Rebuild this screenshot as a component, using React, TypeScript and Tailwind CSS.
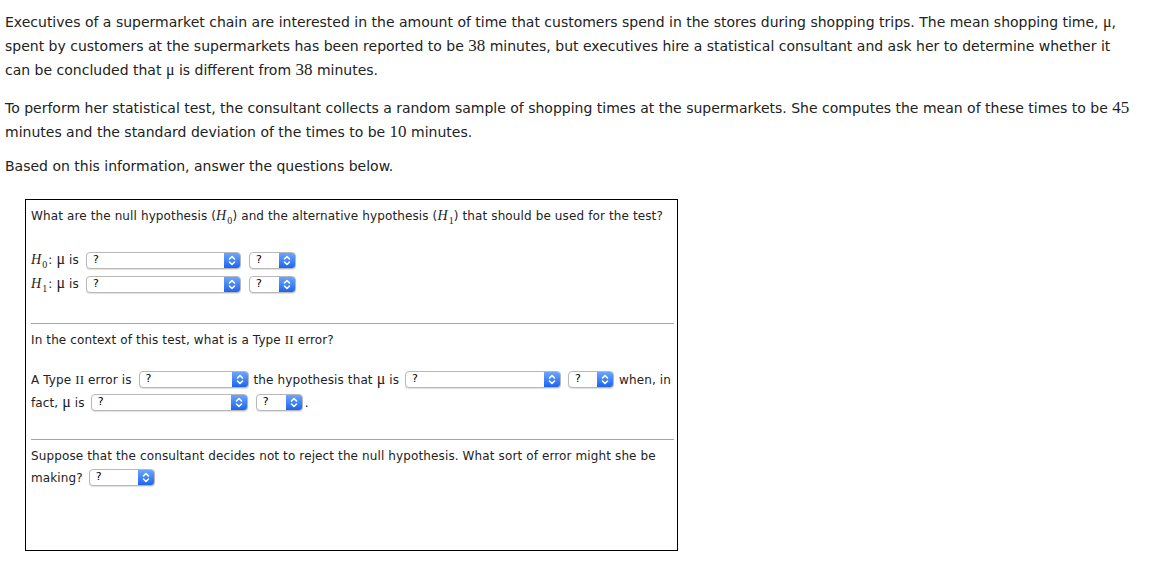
import React from 'react';

const serif = "font-['Liberation_Serif',serif]";

function Num({ children }: { children: React.ReactNode }) {
  return <span className={`${serif} text-[17px] leading-none`}>{children}</span>;
}

function Mu() {
  return <span className={`${serif} text-[16px] leading-none`}>μ</span>;
}

function Roman({ children }: { children: React.ReactNode }) {
  return <span className={`${serif} text-[13px] leading-none`}>{children}</span>;
}

function Sub({ letter, idx }: { letter: string; idx: string }) {
  return (
    <span className={`${serif} text-[14px] leading-none`}>
      <i>{letter}</i>
      <span className="relative top-[4px] ml-[1px] text-[10px]">{idx}</span>
    </span>
  );
}

function Select({ width, className = '' }: { width: number; className?: string }) {
  return (
    <span
      className={`inline-flex h-[17px] shrink-0 items-stretch overflow-hidden rounded-[4px] border border-[#b8b8b8] bg-white align-middle shadow-[0_1px_1px_rgba(0,0,0,0.12)] ${className}`}
      style={{ width }}
    >
      <span className="flex flex-1 items-center pl-[6px] font-['DejaVu_Sans',sans-serif] text-[11px] tracking-normal text-black">?</span>
      <span className="flex w-[16px] items-center justify-center bg-gradient-to-b from-[#6aa6fb] to-[#1d63ef]">
        <svg width="8" height="11" viewBox="0 0 8 11" fill="none" stroke="white" strokeWidth="1.6" strokeLinecap="round" strokeLinejoin="round">
          <path d="M1.5 4 L4 1.5 L6.5 4" />
          <path d="M1.5 7 L4 9.5 L6.5 7" />
        </svg>
      </span>
    </span>
  );
}

export default function App() {
  return (
    <div className="min-h-[563px] bg-white px-[5px] pt-[10px] font-['DejaVu_Sans',sans-serif] text-[14px] text-[#222] antialiased">
      <p className="leading-[24px]">
        Executives of a supermarket chain are interested in the amount of time that customers spend in the stores during shopping trips. The mean shopping time, <Mu />,
        <br />
        spent by customers at the supermarkets has been reported to be <Num>38</Num> minutes, but executives hire a statistical consultant and ask her to determine whether it
        <br />
        can be concluded that <Mu /> is different from <Num>38</Num> minutes.
      </p>
      <p className="mt-[14px] leading-[24px]">
        To perform her statistical test, the consultant collects a random sample of shopping times at the supermarkets. She computes the mean of these times to be <Num>45</Num>
        <br />
        minutes and the standard deviation of the times to be <Num>10</Num> minutes.
      </p>
      <p className="mt-[10px] leading-[24px]">Based on this information, answer the questions below.</p>

      <div className="ml-[20px] mt-[21px] h-[352px] w-[653px] border border-black pl-[5px] pr-[3px] pt-[6px] text-[12px] tracking-[0.12px] text-[#222]">
        <div className="leading-[20px]">
          What are the null hypothesis (<Sub letter="H" idx="0" />) and the alternative hypothesis (<Sub letter="H" idx="1" />) that should be used for the test?
        </div>

        <div className="mt-[22px] flex h-[24px] items-center whitespace-nowrap">
          <Sub letter="H" idx="0" />
          <span className="ml-[1px]">: <Mu /> is</span>
          <Select width={155} className="ml-[7px]" />
          <Select width={47} className="ml-[8px]" />
        </div>
        <div className="flex h-[24px] items-center whitespace-nowrap">
          <Sub letter="H" idx="1" />
          <span className="ml-[1px]">: <Mu /> is</span>
          <Select width={155} className="ml-[7px]" />
          <Select width={47} className="ml-[8px]" />
        </div>

        <div className="mt-[27px] h-px bg-[#a5a5a5]" />

        <div className="mt-[6px] leading-[20px]">
          In the context of this test, what is a Type <Roman>II</Roman> error?
        </div>

        <div className="mt-[18px] flex h-[23px] items-center whitespace-nowrap">
          <span>A Type <Roman>II</Roman> error is</span>
          <Select width={110} className="ml-[7px]" />
          <span className="ml-[5px]">the hypothesis that <Mu /> is</span>
          <Select width={156} className="ml-[6px]" />
          <Select width={46} className="ml-[7px]" />
          <span className="ml-[5px]">when, in</span>
        </div>
        <div className="flex h-[23px] items-center whitespace-nowrap">
          <span>fact, <Mu /> is</span>
          <Select width={157} className="ml-[6px]" />
          <Select width={47} className="ml-[8px]" />
          <span className="ml-[2px]">.</span>
        </div>

        <div className="mt-[25px] h-px bg-[#a5a5a5]" />

        <div className="mt-[6px] leading-[21px]">
          Suppose that the consultant decides not to reject the null hypothesis. What sort of error might she be
        </div>
        <div className="flex h-[21px] items-center whitespace-nowrap">
          <span>making?</span>
          <Select width={66} className="ml-[6px]" />
        </div>
      </div>
    </div>
  );
}
